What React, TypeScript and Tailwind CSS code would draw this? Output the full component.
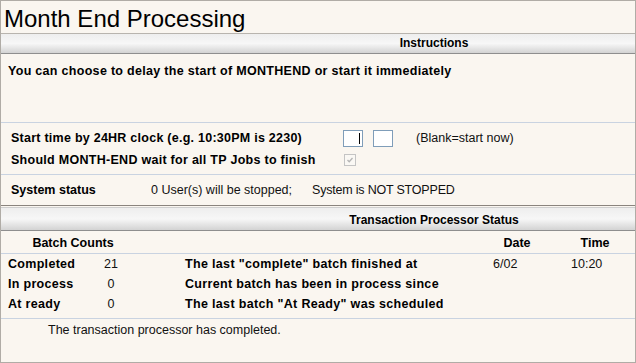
import React from "react";

const Bar = ({ title, cls }: { title: string; cls: string }) => (
  <div className={`flex bg-linear-to-b from-[#eeeeee] via-[#f7f7f7] to-[#d3d3d3] ${cls}`}>
    <div className="w-[232px]" />
    <div className="flex-1 text-center font-bold text-[12px]">{title}</div>
  </div>
);

export default function App() {
  return (
    <div className="w-[636px] h-[363px] bg-[#faf6f0] border border-[#b0aca6] font-['Liberation_Sans',Arial,sans-serif] text-[12.5px] text-black overflow-hidden flex flex-col">
      <div className="pt-[4px] pb-[1px] pl-[3px] leading-[27px] text-[24px] border-b border-[#b8b4ae]">
        Month End Processing
      </div>
      <Bar title="Instructions" cls="h-[20px] leading-[19px] border-b border-[#8e8e8e]" />
      <div className="h-[69px] pt-[10px] pl-[7px] leading-[15px] font-bold tracking-[0.3px] border-b border-[#c9d3e1]">
        You can choose to delay the start of MONTHEND or start it immediately
      </div>
      <div className="h-[52px] pt-[4px] border-b border-[#c9d3e1]">
        <div className="h-[22px] flex items-center pl-[10px]">
          <div className="w-[332px] font-bold tracking-[0.25px]">Start time by 24HR clock (e.g. 10:30PM is 2230)</div>
          <div className="w-[20px] h-[17px] bg-white border border-[#7f9db9] relative">
            <span className="absolute right-[2px] top-[2px] w-[1px] h-[11px] bg-black" />
          </div>
          <div className="ml-[10px] w-[20px] h-[17px] bg-white border border-[#7f9db9]" />
          <div className="ml-[23px] text-[#111]">(Blank=start now)</div>
        </div>
        <div className="h-[22px] flex items-center pl-[10px]">
          <div className="w-[333px] font-bold tracking-[0.28px]">Should MONTH-END wait for all TP Jobs to finish</div>
          <div className="w-[12px] h-[12px] border border-[#c4c4c4] bg-[#faf8f4] flex items-center justify-center">
            <svg width="8" height="8" viewBox="0 0 8 8">
              <path d="M1.5 4 L3.2 5.7 L6.5 2" stroke="#b4b4b4" strokeWidth="1.3" fill="none" />
            </svg>
          </div>
        </div>
      </div>
      <div className="h-[31px] flex items-center pl-[10px] border-b border-[#8a847e]">
        <div className="w-[140px] font-bold">System status</div>
        <div className="w-[161px] text-[#111]">0 User(s) will be stopped;</div>
        <div className="text-[#111] tracking-[-0.2px]">System is NOT STOPPED</div>
      </div>
      <Bar
        title="Transaction Processor Status"
        cls="mt-[1px] h-[24px] pt-[3px] leading-[19px] border-t border-t-[#cfcfcf] border-b border-b-[#8e8e8e]"
      />
      <div className="h-[23px] pt-[5px] leading-[15px] pl-[7px] flex font-bold border-b border-[#c9d3e1]">
        <div className="w-[130px] text-center">Batch Counts</div>
        <div className="w-[355px]" />
        <div className="w-[48px] text-center">Date</div>
        <div className="w-[30px]" />
        <div className="w-[48px] text-center">Time</div>
      </div>
      <div className="h-[65px] pl-[7px] border-b border-[#c9d3e1]">
        {[
          ["Completed", "21", 'The last "complete" batch finished at', "6/02", "10:20"],
          ["In process", "0", "Current batch has been in process since", "", ""],
          ["At ready", "0", 'The last batch "At Ready" was scheduled', "", ""],
        ].map((r) => (
          <div key={r[0]} className="h-[20px] flex items-center">
            <div className="w-[76px] font-bold tracking-[0.3px]">{r[0]}</div>
            <div className="w-[54px] text-center text-[#111]">{r[1]}</div>
            <div className="w-[47px]" />
            <div className="w-[308px] font-bold tracking-[0.33px]">{r[2]}</div>
            <div className="w-[78px] text-[#111]">{r[3]}</div>
            <div className="w-[48px] text-[#111]">{r[4]}</div>
          </div>
        ))}
      </div>
      <div className="pt-[4px] pl-[47px] leading-[15px] text-[#111]">
        The transaction processor has completed.
      </div>
    </div>
  );
}
